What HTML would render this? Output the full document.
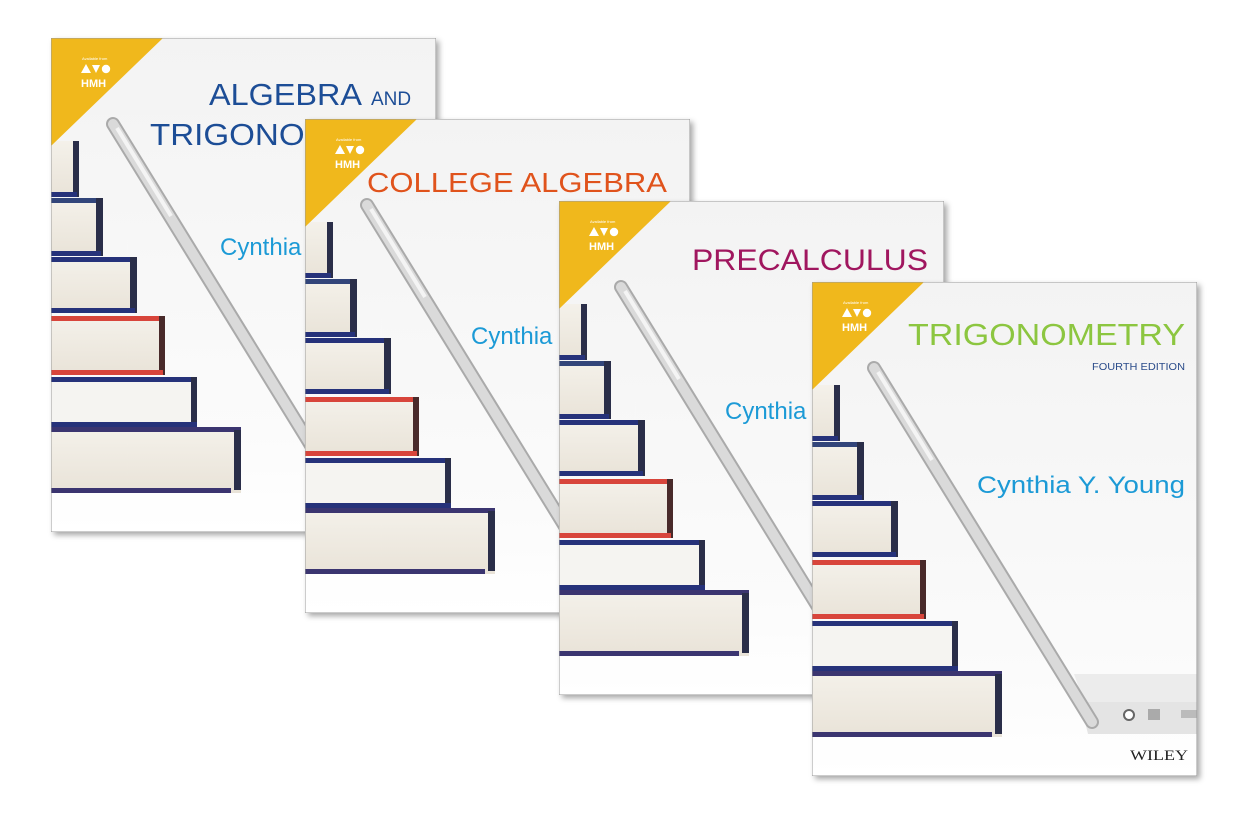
<!DOCTYPE html>
<html><head><meta charset="utf-8"><style>
html,body{margin:0;padding:0;background:#fff;width:1259px;height:823px;overflow:hidden}
svg{display:block}
.t{font-family:"Liberation Sans",sans-serif}
</style></head><body>
<svg width="1259" height="823" viewBox="0 0 1259 823" xmlns="http://www.w3.org/2000/svg">
<defs>
<linearGradient id="bg" x1="0" y1="0" x2="0" y2="1"><stop offset="0" stop-color="#f3f3f3"/><stop offset="0.8" stop-color="#fbfbfb"/><stop offset="1" stop-color="#ffffff"/></linearGradient>
<linearGradient id="pg" x1="0" y1="0" x2="0" y2="1"><stop offset="0" stop-color="#f4f1ea"/><stop offset="1" stop-color="#e9e3d8"/></linearGradient>
<filter id="sh" x="-5%" y="-5%" width="110%" height="110%"><feDropShadow dx="3" dy="3" stdDeviation="3" flood-color="#000" flood-opacity="0.35"/></filter>
<symbol id="art" viewBox="0 0 385 494" width="385" height="494">
<rect width="385" height="494" fill="url(#bg)"/>
<!-- laptop base -->
<path d="M262 392 L385 392 L385 420 L272 420 Z" fill="#ececec"/>
<path d="M268 420 L385 420 L385 452 L276 452 Z" fill="#e4e4e4"/>
<circle cx="317" cy="433" r="5" fill="#fff" stroke="#666" stroke-width="2"/>
<rect x="336" y="427" width="12" height="11" fill="#aaa"/>
<rect x="369" y="428" width="16" height="8" fill="#bbb"/>
<!-- tablet -->
<line x1="62" y1="86" x2="280" y2="440" stroke="#aaa" stroke-width="14" stroke-linecap="round"/>
<line x1="62" y1="86" x2="280" y2="440" stroke="#dadada" stroke-width="10" stroke-linecap="round"/>
<line x1="66" y1="90" x2="120" y2="178" stroke="#f4f4f4" stroke-width="4"/>
<!-- books -->
<rect x="0" y="103" width="28" height="56" fill="url(#pg)"/><rect x="22" y="103" width="6" height="56" fill="#2b2f4a"/><rect x="0" y="154" width="26" height="5" fill="#25327a"/>
<rect x="0" y="160" width="52" height="58" fill="url(#pg)"/><rect x="0" y="160" width="50" height="5" fill="#33457a"/><rect x="45" y="160" width="7" height="58" fill="#2b2f4a"/><rect x="0" y="213" width="50" height="5" fill="#25327a"/>
<rect x="0" y="219" width="86" height="56" fill="url(#pg)"/><rect x="0" y="219" width="84" height="5" fill="#25327a"/><rect x="79" y="219" width="7" height="56" fill="#2b2f4a"/><rect x="0" y="270" width="84" height="5" fill="#25327a"/>
<rect x="0" y="278" width="114" height="59" fill="url(#pg)"/><rect x="0" y="278" width="112" height="5" fill="#d8443a"/><rect x="108" y="278" width="6" height="59" fill="#4a2a2a"/><rect x="0" y="332" width="112" height="5" fill="#d8443a"/>
<rect x="0" y="339" width="146" height="50" fill="#f5f4f1"/><rect x="0" y="339" width="146" height="5" fill="#25327a"/><rect x="140" y="339" width="6" height="50" fill="#2b2f4a"/><rect x="0" y="384" width="146" height="5" fill="#25327a"/>
<rect x="0" y="389" width="190" height="66" fill="url(#pg)"/><rect x="0" y="389" width="190" height="5" fill="#3b3670"/><rect x="183" y="392" width="7" height="60" fill="#2b2f4a"/><rect x="0" y="450" width="180" height="5" fill="#3b3670"/>
<!-- yellow triangle -->
<polygon points="0,0 112,0 0,108" fill="#f0b81c"/>
<polygon points="30,35 35,26 40,35" fill="#fff"/>
<polygon points="41,27 49,27 45,35" fill="#fff"/>
<circle cx="55" cy="31" r="4.2" fill="#fff"/>
<rect width="385" height="494" fill="none" stroke="#9a9a9a" stroke-width="1"/>
</symbol>
</defs>

<g transform="translate(51,38)" filter="url(#sh)">
<use href="#art"/>
<text class="t" x="31" y="22" font-size="4" fill="#fff">Available from</text>
<text class="t" x="30" y="49" font-size="11" font-weight="bold" fill="#fff">HMH</text>
<text class="t" x="158" y="67" font-size="31" fill="#1f4e96" textLength="153" lengthAdjust="spacingAndGlyphs">ALGEBRA</text>
<text class="t" x="320" y="67" font-size="19" fill="#1f4e96">AND</text>
<text class="t" x="99" y="107" font-size="31" fill="#1f4e96" textLength="270" lengthAdjust="spacingAndGlyphs">TRIGONOMETRY</text>
<text class="t" x="169" y="217" font-size="24" fill="#1a9ad6">Cynthia Y. Young</text>
</g>

<g transform="translate(305,119)" filter="url(#sh)">
<use href="#art"/>
<text class="t" x="31" y="22" font-size="4" fill="#fff">Available from</text>
<text class="t" x="30" y="49" font-size="11" font-weight="bold" fill="#fff">HMH</text>
<text class="t" x="62" y="73" font-size="28" fill="#e0531c" textLength="300" lengthAdjust="spacingAndGlyphs">COLLEGE ALGEBRA</text>
<text class="t" x="166" y="225" font-size="24" fill="#1a9ad6">Cynthia Y. Young</text>
</g>

<g transform="translate(559,201)" filter="url(#sh)">
<use href="#art"/>
<text class="t" x="31" y="22" font-size="4" fill="#fff">Available from</text>
<text class="t" x="30" y="49" font-size="11" font-weight="bold" fill="#fff">HMH</text>
<text class="t" x="133" y="69" font-size="30" fill="#a0195e" textLength="236" lengthAdjust="spacingAndGlyphs">PRECALCULUS</text>
<text class="t" x="166" y="218" font-size="24" fill="#1a9ad6">Cynthia Y. Young</text>
</g>

<g transform="translate(812,282)" filter="url(#sh)">
<use href="#art"/>
<text class="t" x="31" y="22" font-size="4" fill="#fff">Available from</text>
<text class="t" x="30" y="49" font-size="11" font-weight="bold" fill="#fff">HMH</text>
<text class="t" x="96" y="63" font-size="31" fill="#8cc63f" textLength="277" lengthAdjust="spacingAndGlyphs">TRIGONOMETRY</text>
<text class="t" x="280" y="88" font-size="10" fill="#2a4b8a" textLength="93" lengthAdjust="spacingAndGlyphs">FOURTH EDITION</text>
<text class="t" x="165" y="211" font-size="24" fill="#1a9ad6" textLength="208" lengthAdjust="spacingAndGlyphs">Cynthia Y. Young</text>
<text x="318" y="478" font-family="Liberation Serif,serif" font-size="15" fill="#222" textLength="58" lengthAdjust="spacingAndGlyphs">WILEY</text>
</g>
</svg>
</body></html>
